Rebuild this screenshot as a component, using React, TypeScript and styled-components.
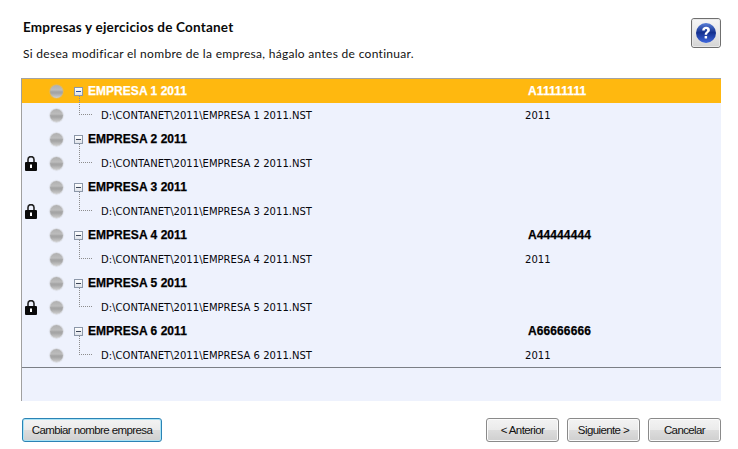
import React from "react";
import styled, { createGlobalStyle } from "styled-components";

const Global = createGlobalStyle`
  html, body { margin: 0; padding: 0; background: #fff; }
  #root { width: 738px; height: 449px; overflow: hidden; }
`;

const Page = styled.div`
  width: 738px;
  height: 449px;
  box-sizing: border-box;
  padding: 19px 17px 0 21px;
  display: flex;
  flex-direction: column;
  color: #000;
`;

const Header = styled.header`
  height: 59px;
  display: flex;
  justify-content: space-between;
  align-items: flex-start;
`;

const Titles = styled.div`
  padding: 0 0 0 2px;
  display: flex;
  flex-direction: column;
  gap: 11px;
`;

const Title = styled.h1`
  margin: 0;
  font: 700 13.5px/16px "Lato", sans-serif;
  letter-spacing: 0.2px;
  color: #0a0a0a;
`;

const Subtitle = styled.p`
  margin: 0;
  font: 400 12px/16px "Lato", sans-serif;
  letter-spacing: 0.3px;
  color: #111;
`;

const HelpButton = styled.button`
  width: 30px;
  height: 30px;
  margin: -1px 0 0 0;
  padding: 0;
  border: 1px solid #6f6f6f;
  border-radius: 3px;
  outline: 1px solid #e8e8e8;
  outline-offset: -2px;
  background: linear-gradient(#f6f6f6, #e8e8e8 50%, #d4d4d4);
  display: flex;
  align-items: center;
  justify-content: center;
`;

const Tree = styled.section`
  width: 700px;
  height: 323px;
  box-sizing: border-box;
  border-top: 1px solid #a3a3a3;
  border-left: 1px solid #a0a0a0;
  background: #eef2fd;
  display: flex;
  flex-direction: column;
`;

const Rows = styled.div`
  height: 288px;
  flex: none;
  border-bottom: 1px solid #7b7f86;
  display: flex;
  flex-direction: column;
`;

const Row = styled.div<{ $selected?: boolean }>`
  height: 24px;
  flex: none;
  display: grid;
  grid-template-columns: 28px 13px 20px 1fr;
  align-items: center;
  background: ${(p) => (p.$selected ? "#ffb80f" : "transparent")};
  color: ${(p) => (p.$selected ? "#fff" : "#000")};
`;

const LockCell = styled.div`
  display: flex;
  padding-left: 3px;
`;

const Dot = styled.span`
  display: block;
  width: 13px;
  height: 13px;
  border-radius: 50%;
  box-shadow: 0 0 1px 0.5px rgba(190, 190, 190, 0.7);
  background: linear-gradient(#b0b0b0 0%, #bcbcbc 38%, #a6a6a6 52%, #a4a4a4 62%, #cfcfcf 100%);
`;

const Expander = styled.div`
  position: relative;
  height: 24px;
  display: flex;
  align-items: center;
  justify-content: flex-end;
`;

const MinusBox = styled.span<{ $selected?: boolean }>`
  width: 7px;
  height: 7px;
  position: relative;
  border: 1px solid #8c97a8;
  background: linear-gradient(#ffffff, #dfe3ea);
  &::after {
    content: "";
    position: absolute;
    left: 1px;
    right: 1px;
    top: 3px;
    height: 1px;
    background: ${(p) => (p.$selected ? "#2a55a8" : "#3c4658")};
  }
`;

const Connector = styled.span`
  position: absolute;
  left: 16px;
  top: -7px;
  width: 13px;
  height: 19px;
  box-sizing: border-box;
  border-left: 1px dotted #8d8d8d;
  border-bottom: 1px dotted #8d8d8d;
`;

const CompanyLine = styled.div`
  display: grid;
  grid-template-columns: 440px 100px;
  padding-left: 5px;
  font: 700 12px/16px "Liberation Sans", Arial, sans-serif;
  letter-spacing: 0.04px;
`;

const CompanyName = styled.span`
  -webkit-text-stroke: 0.25px currentColor;
`;

const CompanyCode = styled(CompanyName)`
  letter-spacing: 0.1px;
`;

const PathLine = styled.div`
  display: grid;
  grid-template-columns: 424px 100px;
  padding-left: 18px;
  font: 400 10px/14px "DejaVu Sans", Verdana, sans-serif;
  letter-spacing: 0.03px;
  color: #06060c;
  transform: translateY(1px);
`;

const Footer = styled.footer`
  display: flex;
  justify-content: space-between;
  align-items: center;
  width: 699px;
  margin: 17px 0 0 1px;
`;

const Group = styled.div`
  display: flex;
  gap: 8px;
`;

const Button = styled.button<{ $primary?: boolean }>`
  height: 24px;
  width: ${(p) => (p.$primary ? "140px" : "73px")};
  box-sizing: border-box;
  padding: 0;
  white-space: nowrap;
  border: 1px solid ${(p) => (p.$primary ? "#2b83b5" : "#8a8a8a")};
  border-radius: 3px;
  box-shadow: inset 0 0 0 1px ${(p) => (p.$primary ? "#a9e3f5" : "#fbfbfb")};
  background: linear-gradient(#f3f3f3 0%, #ebebeb 48%, #dcdcdc 52%, #cfcfcf 100%);
  font: 400 11.5px/16px "Liberation Sans", Arial, sans-serif;
  letter-spacing: -0.6px;
  color: #111;
`;

const LockIcon = () => (
  <svg width="12" height="15" viewBox="0 0 12 15">
    <path d="M3 6.5V3.6a3 3 0 0 1 6 0V6.5" fill="none" stroke="#222" strokeWidth="1.6" />
    <rect x="0" y="6" width="12" height="9" rx="1" fill="#0a0a0a" />
    <rect x="5" y="8.5" width="2" height="3.5" fill="#fff" />
  </svg>
);

const HelpIcon = () => (
  <svg width="20" height="20" viewBox="0 0 20 20">
    <defs>
      <linearGradient id="help" x1="0" y1="0" x2="0" y2="1">
        <stop offset="0" stopColor="#5a80d8" />
        <stop offset="0.48" stopColor="#14308f" />
        <stop offset="1" stopColor="#3f68de" />
      </linearGradient>
    </defs>
    <circle cx="10" cy="10" r="10" fill="url(#help)" />
    <path d="M6.2 7.4c0-2.3 1.8-3.6 3.9-3.6s3.8 1.2 3.8 3.2c0 2.7-2.8 2.6-2.8 4.8H8.7c0-3.2 2.5-3.1 2.5-4.6 0-.7-.5-1.2-1.2-1.2-.8 0-1.2.6-1.3 1.4z" fill="#fff" />
    <rect x="8.6" y="12.9" width="2.5" height="2.5" rx=".5" fill="#fff" />
  </svg>
);

const companies = [
  { n: 1, nif: "A11111111", year: "2011", locked: false },
  { n: 2, nif: "", year: "", locked: true },
  { n: 3, nif: "", year: "", locked: true },
  { n: 4, nif: "A44444444", year: "2011", locked: false },
  { n: 5, nif: "", year: "", locked: true },
  { n: 6, nif: "A66666666", year: "2011", locked: false },
];

export default function App() {
  return (
    <Page>
      <Global />
      <Header>
        <Titles>
          <Title>Empresas y ejercicios de Contanet</Title>
          <Subtitle>Si desea modificar el nombre de la empresa, hágalo antes de continuar.</Subtitle>
        </Titles>
        <HelpButton aria-label="Ayuda">
          <HelpIcon />
        </HelpButton>
      </Header>
      <Tree>
        <Rows>
          {companies.map((c) => (
            <React.Fragment key={c.n}>
              <Row $selected={c.n === 1}>
                <LockCell />
                <Dot />
                <Expander><MinusBox $selected={c.n === 1} /></Expander>
                <CompanyLine>
                  <CompanyName>EMPRESA {c.n} 2011</CompanyName>
                  <CompanyCode>{c.nif}</CompanyCode>
                </CompanyLine>
              </Row>
              <Row>
                <LockCell>{c.locked && <LockIcon />}</LockCell>
                <Dot />
                <Expander><Connector /></Expander>
                <PathLine>
                  <span>D:\CONTANET\2011\EMPRESA {c.n} 2011.NST</span>
                  <span>{c.year}</span>
                </PathLine>
              </Row>
            </React.Fragment>
          ))}
        </Rows>
      </Tree>
      <Footer>
        <Button $primary>Cambiar nombre empresa</Button>
        <Group>
          <Button>&lt; Anterior</Button>
          <Button>Siguiente &gt;</Button>
          <Button>Cancelar</Button>
        </Group>
      </Footer>
    </Page>
  );
}
